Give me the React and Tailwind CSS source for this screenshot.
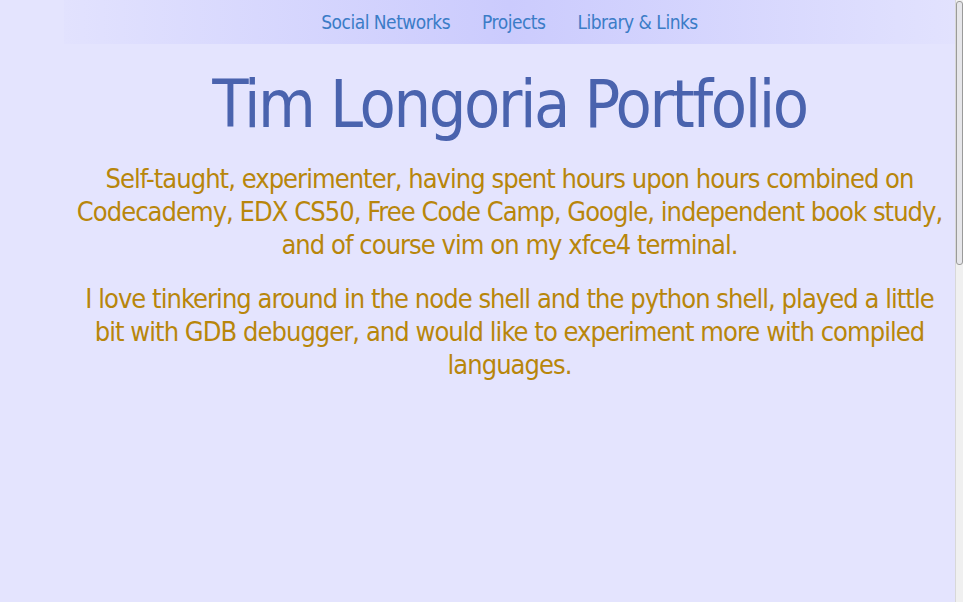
import React from 'react';

const links = ['Social Networks', 'Projects', 'Library & Links'];

const App = () => {
    return (
        <div className="w-full h-[602px] flex bg-[#e4e4fe] overflow-hidden" style={{ fontFamily: '"DejaVu Sans Condensed", "DejaVu Sans", sans-serif' }}>
            <div className="flex-1 pl-[64px]">
                <nav className="h-[44px] flex items-center justify-center gap-8 bg-gradient-to-r from-[#e2e2fe] via-[#cbcbfd] to-[#e2e2fe]">
                    {links.map((link) => (
                        <a key={link} className="text-[19px] tracking-[-0.5px] text-[#3b7cc7]">
                            {link}
                        </a>
                    ))}
                </nav>

                <h1 className="text-center text-[66px] leading-[80px] tracking-[-2.4px] mt-[21px] text-[#4a63ae]">
                    Tim Longoria Portfolio
                </h1>

                <div className="text-center text-[27px] leading-[33px] tracking-[-0.95px] text-[#b8860b] mt-[17px]">
                    <p>
                        Self-taught, experimenter, having spent hours upon hours combined on<br />
                        Codecademy, EDX CS50, Free Code Camp, Google, independent book study,<br />
                        and of course vim on my xfce4 terminal.
                    </p>
                    <p className="mt-[21px]">
                        I love tinkering around in the node shell and the python shell, played a little<br />
                        bit with GDB debugger, and would like to experiment more with compiled<br />
                        languages.
                    </p>
                </div>
            </div>

            {/* scrollbar */}
            <div className="w-[8px] bg-[#f0f0f0] border-l border-[#d8d8d8] pt-[1px]">
                <div className="h-[264px] bg-[#e6e6ea] border border-[#9a9a9a] rounded-[3px]" />
            </div>
        </div>
    );
};

export default App;
